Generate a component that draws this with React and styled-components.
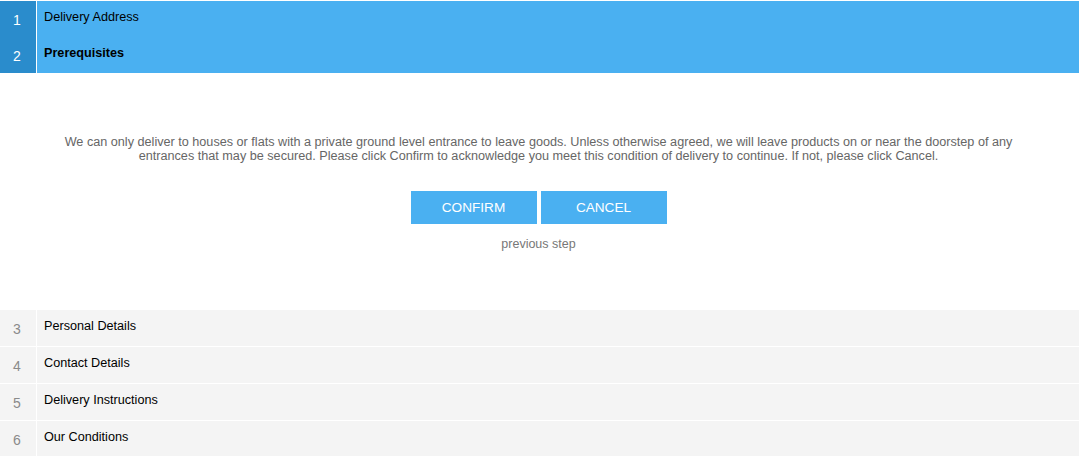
import styled, { createGlobalStyle } from 'styled-components';

const GlobalStyle = createGlobalStyle`
  body {
    margin: 0;
    background: #fff;
    font-family: 'Liberation Sans', Arial, sans-serif;
  }
`;

const Wizard = styled.div`
  width: 1079px;
  padding-top: 1px;
  display: flex;
  flex-direction: column;
`;

const Step = styled.div`
  display: flex;
  height: 36px;
  background: ${p => (p.active ? '#4ab0f1' : '#f4f4f4')};
  margin-bottom: ${p => (p.active ? '0' : '1px')};
`;

const Num = styled.div`
  width: 37px;
  flex-shrink: 0;
  border-right: 1px solid #fff;
  background: ${p => (p.active ? '#2a8ccc' : 'transparent')};
  color: ${p => (p.active ? '#fff' : '#8a8a8a')};
  font-size: 14px;
  display: flex;
  justify-content: center;
  align-items: center;
  padding: 1px 2px 0 0;
  box-sizing: border-box;
`;

const Label = styled.div`
  padding-left: 7px;
  font-size: 12.65px;
  color: #000;
  font-weight: ${p => (p.bold ? 'bold' : 'normal')};
  display: flex;
  align-items: center;
  padding-bottom: 5px;
`;

const Panel = styled.div`
  height: 237px;
  box-sizing: border-box;
  padding: 62px 56px 0 54px;
  display: flex;
  flex-direction: column;
  align-items: center;
`;

const Message = styled.p`
  margin: 0;
  font-size: 12.65px;
  line-height: 14px;
  color: #666;
  text-align: center;
`;

const Actions = styled.div`
  display: flex;
  gap: 4px;
  margin-top: 28px;
`;

const Button = styled.button`
  width: 126px;
  height: 33px;
  border: 0;
  padding: 0;
  background: #4ab0f1;
  color: #fff;
  font-family: 'Liberation Sans', Arial, sans-serif;
  font-size: 13.6px;
  text-transform: uppercase;
  cursor: pointer;
`;

const Back = styled.div`
  margin-top: 13px;
  font-size: 12.5px;
  color: #777;
`;

const done = [
  { n: 1, label: 'Delivery Address' },
  { n: 2, label: 'Prerequisites', bold: true },
];

const todo = [
  { n: 3, label: 'Personal Details' },
  { n: 4, label: 'Contact Details' },
  { n: 5, label: 'Delivery Instructions' },
  { n: 6, label: 'Our Conditions' },
];

export default function App() {
  return (
    <>
      <GlobalStyle />
      <Wizard>
        {done.map(s => (
          <Step active key={s.n}>
            <Num active>{s.n}</Num>
            <Label bold={s.bold}>{s.label}</Label>
          </Step>
        ))}
        <Panel>
          <Message>
            We can only deliver to houses or flats with a private ground level entrance to leave goods. Unless otherwise agreed, we will leave products on or near the doorstep of any entrances that may be secured. Please click Confirm to acknowledge you meet this condition of delivery to continue. If not, please click Cancel.
          </Message>
          <Actions>
            <Button>Confirm</Button>
            <Button>Cancel</Button>
          </Actions>
          <Back>previous step</Back>
        </Panel>
        {todo.map(s => (
          <Step key={s.n}>
            <Num>{s.n}</Num>
            <Label>{s.label}</Label>
          </Step>
        ))}
      </Wizard>
    </>
  );
}
